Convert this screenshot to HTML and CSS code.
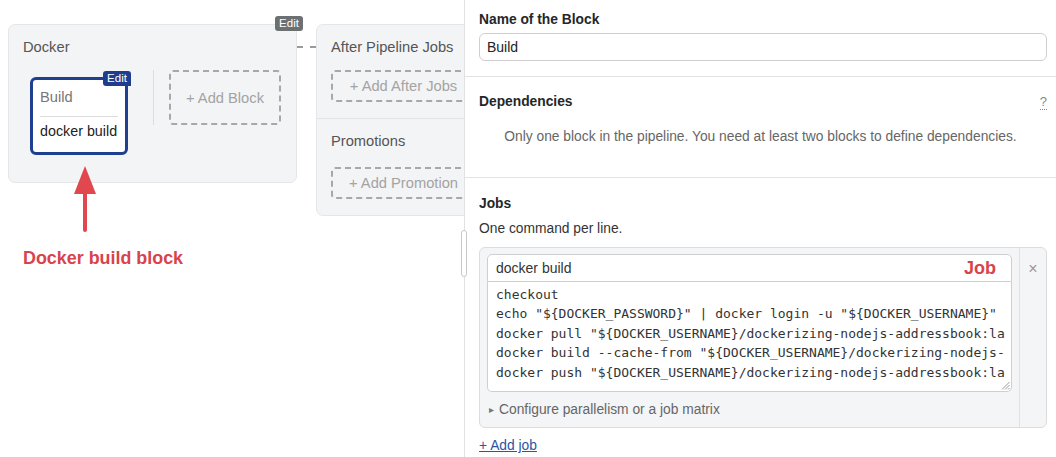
FILE: index.html
```html
<!DOCTYPE html>
<html lang="en">
<head>
<meta charset="utf-8">
<title>Pipeline editor</title>
<link rel="stylesheet" href="styles.css">
</head>
<body>
<div class="app">
  <section class="canvas">
    <div class="stages">
      <div class="stage stage-main">
        <span class="badge badge-gray">Edit</span>
        <div class="stage-title">Docker</div>
        <div class="stage-body">
          <div class="block">
            <span class="badge badge-blue">Edit</span>
            <div class="block-name">Build</div>
            <div class="block-job">docker build</div>
          </div>
          <div class="vsep"></div>
          <div class="add-box add-block">+ Add Block</div>
        </div>
      </div>
      <div class="connector"></div>
      <div class="stage stage-after">
        <div class="after-section first">
          <div class="stage-title">After Pipeline Jobs</div>
          <div class="add-box add-wide">+ Add After Jobs</div>
        </div>
        <div class="after-section second">
          <div class="stage-title">Promotions</div>
          <div class="add-box add-wide">+ Add Promotion</div>
        </div>
      </div>
    </div>
    <div class="annotation">
      <svg class="arrow" width="24" height="68" viewBox="0 0 24 68">
        <polygon points="12,0 23,28 1,28" fill="#e0474e"/>
        <rect x="10" y="24" width="4" height="42" rx="2" fill="#e0474e"/>
      </svg>
      <div class="annotation-label">Docker build block</div>
    </div>
  </section>
  <div class="resize-grip"></div>
  <aside class="panel">
    <div class="section section-name">
      <div class="label">Name of the Block</div>
      <div class="text-input">Build</div>
    </div>
    <div class="section section-deps">
      <div class="label-row">
        <div class="label">Dependencies</div>
        <span class="help">?</span>
      </div>
      <p class="deps-note">Only one block in the pipeline. You need at least two blocks to define dependencies.</p>
    </div>
    <div class="section section-jobs">
      <div class="label">Jobs</div>
      <div class="hint">One command per line.</div>
      <div class="job-card">
        <div class="job-main">
          <div class="job-name">docker build<span class="job-tag">Job</span></div>
          <div class="job-commands">
            <div class="commands">
<div class="cmd">checkout</div>
<div class="cmd">echo "${DOCKER_PASSWORD}" | docker login -u "${DOCKER_USERNAME}"</div>
<div class="cmd">docker pull "${DOCKER_USERNAME}/dockerizing-nodejs-addressbook:la</div>
<div class="cmd">docker build --cache-from "${DOCKER_USERNAME}/dockerizing-nodejs-</div>
<div class="cmd">docker push "${DOCKER_USERNAME}/dockerizing-nodejs-addressbook:la</div>
            </div>
            <svg class="grip" width="9" height="9" viewBox="0 0 9 9">
              <line x1="8.5" y1="1" x2="1" y2="8.5" stroke="#999" stroke-width="1"/>
              <line x1="8.5" y1="4" x2="4" y2="8.5" stroke="#999" stroke-width="1"/>
              <line x1="8.5" y1="7" x2="7" y2="8.5" stroke="#999" stroke-width="1"/>
            </svg>
          </div>
          <div class="configure"><span class="caret">&#9656;</span>Configure parallelism or a job matrix</div>
        </div>
        <div class="job-side"><span class="close">&times;</span></div>
      </div>
      <a class="add-job" href="#">+ Add job</a>
    </div>
  </aside>
</div>
</body>
</html>
```

FILE: styles.css
```css
* { box-sizing: border-box; }
html, body { margin: 0; padding: 0; background: #fff; }
body {
  width: 1056px;
  height: 457px;
  overflow: hidden;
  font-family: "Liberation Sans", Arial, sans-serif;
  color: #222;
}
.app {
  position: relative;
  display: flex;
  width: 1056px;
  height: 457px;
}

/* ---------- canvas ---------- */
.canvas {
  position: relative;
  width: 464px;
  flex: none;
  height: 457px;
  overflow: hidden;
  padding: 24px 0 0 8px;
}
.stages {
  display: flex;
  align-items: flex-start;
}
.stage {
  position: relative;
  flex: none;
  background: #f3f4f6;
  border: 1px solid #e5e6e9;
  border-radius: 7px;
}
.stage-main {
  width: 289px;
  height: 159px;
  padding: 13px 15px 0 14px;
}
.stage-title {
  font-size: 14.7px;
  line-height: 18px;
  color: #555;
}
.badge {
  position: absolute;
  font-size: 11.5px;
  line-height: 15px;
  height: 15px;
  width: 28px;
  text-align: center;
  color: #fff;
  border-radius: 3px;
}
.badge-gray {
  background: #6c7073;
  top: -9px;
  right: -7px;
}
.badge-blue {
  background: #1e3d8f;
  top: -9px;
  right: -6px;
  border-radius: 3px 3px 0 3px;
}
.stage-body {
  display: flex;
  align-items: flex-start;
  margin-top: 14px;
  padding-left: 7px;
}
.block {
  position: relative;
  width: 98px;
  height: 78px;
  margin-top: 7px;
  background: #fff;
  border: 3px solid #1f3f90;
  border-radius: 6px;
  padding: 8px 7px 0 7px;
}
.block-name {
  font-size: 14.7px;
  line-height: 18px;
  color: #777;
  padding-bottom: 10px;
  border-bottom: 1px solid #ddd;
}
.block-job {
  font-size: 14.3px;
  line-height: 18px;
  color: #222;
  padding-top: 5px;
}
.vsep {
  width: 1px;
  height: 55px;
  background: #dcdcdc;
  margin: 0 15px 0 25px;
}
.add-box {
  display: flex;
  align-items: center;
  justify-content: center;
  border: 2px dashed #a8a8a8;
  border-radius: 4px;
  color: #a3a3a3;
  font-size: 14.7px;
}
.add-block {
  width: 112px;
  height: 55px;
}
.connector {
  flex: none;
  width: 19px;
  margin-top: 22px;
  border-top: 2px dashed #9a9a9a;
}
.stage-after {
  width: 175px;
  height: 192px;
}
.after-section {
  padding: 13px 14px 0 14px;
}
.after-section.first {
  height: 94px;
  border-bottom: 1px solid #e3e4e7;
}
.after-section.first .stage-title { margin-bottom: 14px; }
.after-section.second .stage-title { margin-bottom: 17px; }
.add-wide {
  width: 145px;
  height: 32px;
}
.annotation {
  position: absolute;
  left: 23px;
  top: 166px;
}
.arrow {
  display: block;
  margin-left: 50px;
}
.annotation-label {
  margin-top: 13px;
  font-size: 17.9px;
  line-height: 22px;
  font-weight: bold;
  color: #d9434a;
  white-space: nowrap;
}
.resize-grip {
  position: absolute;
  left: 461px;
  top: 230px;
  width: 6px;
  height: 47px;
  background: #fff;
  border: 1px solid #c9c9c9;
  border-radius: 3px;
}

/* ---------- panel ---------- */
.panel {
  flex: 1;
  height: 457px;
  border-left: 1px solid #e2e2e2;
  font-size: 13.8px;
}
.section {
  padding: 0 9px 0 14px;
}
.label {
  font-weight: bold;
  font-size: 13.8px;
  line-height: 18px;
  color: #24272a;
}
.section-name {
  padding-top: 11px;
  padding-bottom: 15px;
  border-bottom: 1px solid #e3e3e3;
}
.text-input {
  margin-top: 4px;
  height: 28px;
  border: 1px solid #cfcfcf;
  border-radius: 6px;
  padding: 0 7px;
  line-height: 26px;
  font-size: 14px;
  color: #222;
}
.section-deps {
  padding-top: 16px;
  padding-bottom: 31px;
  border-bottom: 1px solid #e3e3e3;
}
.label-row {
  display: flex;
  justify-content: space-between;
  align-items: center;
}
.help {
  color: #888;
  font-size: 13px;
  line-height: 14px;
  border-bottom: 1px dotted #888;
  margin-right: 0;
}
.deps-note {
  margin: 17px -9px 0 -14px;
  text-align: center;
  line-height: 18px;
  color: #666;
  font-size: 13.8px;
}
.section-jobs {
  padding-top: 17px;
}
.hint {
  margin-top: 7px;
  line-height: 18px;
  color: #333;
}
.job-card {
  display: flex;
  margin-top: 9px;
  background: #f4f5f7;
  border: 1px solid #dcdcdc;
  border-radius: 6px;
}
.job-main {
  width: 540px;
  flex: none;
  padding: 6px 7px 8px 7px;
  border-right: 1px solid #e2e2e2;
}
.job-name {
  position: relative;
  height: 28px;
  background: #fff;
  border: 1px solid #cfcfcf;
  border-radius: 5px 5px 0 0;
  padding: 0 8px;
  line-height: 26px;
  font-size: 14px;
  color: #333;
}
.job-tag {
  position: absolute;
  right: 15px;
  top: 0;
  font-size: 18px;
  line-height: 27px;
  font-weight: bold;
  color: #d9434a;
}
.job-commands {
  position: relative;
  height: 110px;
  background: #fff;
  border: 1px solid #cfcfcf;
  border-top: none;
  border-radius: 0 0 5px 5px;
  padding: 3px 7px 0 8px;
}
.commands {
  font-family: "DejaVu Sans Mono", "Liberation Mono", monospace;
  font-size: 13px;
  line-height: 19.4px;
  color: #333;
}
.cmd { white-space: pre; }
.grip {
  position: absolute;
  right: 1px;
  bottom: 1px;
}
.configure {
  margin-top: 9px;
  line-height: 18px;
  color: #666;
  padding-left: 2px;
}
.caret {
  font-size: 10px;
  color: #777;
  margin-right: 5px;
  vertical-align: 1px;
}
.job-side {
  flex: 1;
  display: flex;
  justify-content: center;
  padding-top: 12px;
}
.close {
  font-size: 16px;
  line-height: 18px;
  height: 18px;
  color: #999;
}
.add-job {
  display: inline-block;
  margin-top: 9px;
  line-height: 18px;
  color: #2b56a4;
  text-decoration: underline;
  font-size: 13.8px;
}
```
